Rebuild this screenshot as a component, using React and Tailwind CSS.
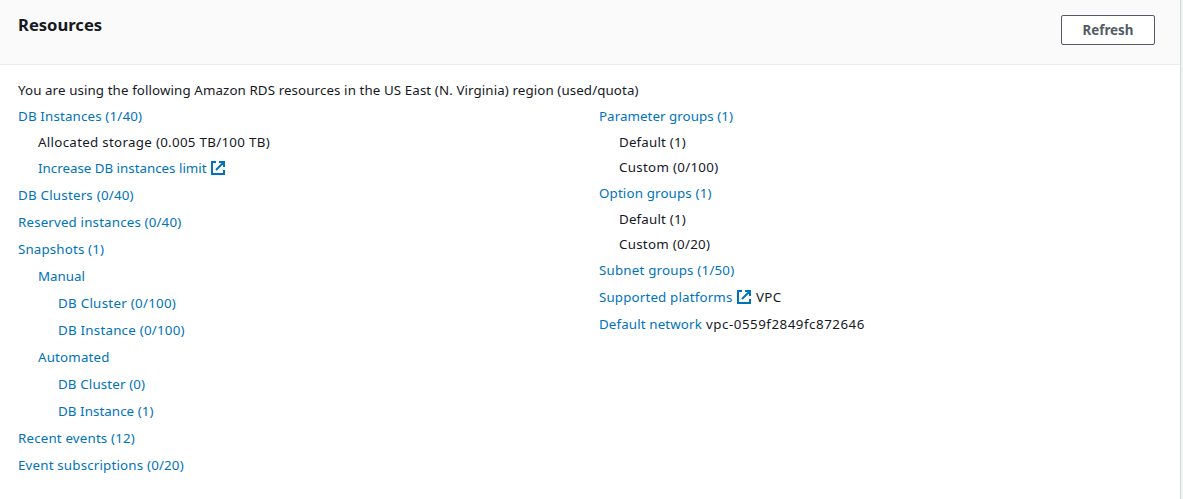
function External({ className }) {
  return (
    <svg className={`h-[14px] w-[14px] shrink-0 text-[#0073bb] ${className}`} viewBox="0 0 14 14" fill="none" stroke="currentColor" strokeWidth="2">
      <path d="M5 1H1v12h12V9M8 1h5v5M13 1L5 9" />
    </svg>
  );
}

function Row({ className, children }) {
  return <div className={`flex items-center whitespace-nowrap ${className}`}>{children}</div>;
}

function Link({ className = '', children }) {
  return <a className={`text-[#0073bb] ${className}`}>{children}</a>;
}

export default function App() {
  return (
    <div className="flex h-[499px] w-[1183px] overflow-hidden bg-[#f2f3f3] text-[13.33px] text-[#16191f] font-['Noto_Sans',sans-serif]">
      <section className="flex w-[1181px] flex-col border-r border-[#d5dbdb] bg-white">
        <header className="flex h-[65px] items-start justify-between border-b border-[#eaeded] bg-[#fafafa] pl-[18px] pr-[25px]">
          <h2 className="mt-[13px] text-[16.6px] font-bold leading-6">Resources</h2>
          <button className="mt-[15px] h-[30px] w-[94px] rounded-[2px] border border-[#545b64] bg-white pt-[2px] text-[13.33px] font-bold text-[#545b64]">Refresh</button>
        </header>
        <p className="mt-[12px] h-[27px] whitespace-nowrap pl-[18px] leading-[26px] tracking-[0.1px]">
          You are using the following Amazon RDS resources in the US East (N. Virginia) region (used/quota)
        </p>
        <div className="grid grid-cols-[581px_1fr] items-start pl-[18px]">
          <div>
            <Row className="h-[26px]"><Link className="tracking-[0.16px]">DB Instances (1/40)</Link></Row>
            <Row className="h-[26px] pl-5 tracking-[0.3px]">Allocated storage (0.005 TB/100 TB)</Row>
            <Row className="h-[26px] pl-5"><Link>Increase DB instances limit</Link><External className="mb-[2px] ml-1" /></Row>
            <Row className="h-[27px]"><Link className="tracking-[0.22px]">DB Clusters (0/40)</Link></Row>
            <Row className="h-[27px]"><Link className="tracking-[0.16px]">Reserved instances (0/40)</Link></Row>
            <Row className="h-[27px]"><Link className="tracking-[0.15px]">Snapshots (1)</Link></Row>
            <Row className="h-[27px] pl-5"><Link>Manual</Link></Row>
            <Row className="h-[27px] pl-10"><Link className="tracking-[0.28px]">DB Cluster (0/100)</Link></Row>
            <Row className="h-[27px] pl-10"><Link className="tracking-[0.23px]">DB Instance (0/100)</Link></Row>
            <Row className="h-[27px] pl-5"><Link className="tracking-[0.17px]">Automated</Link></Row>
            <Row className="h-[27px] pl-10"><Link className="tracking-[0.14px]">DB Cluster (0)</Link></Row>
            <Row className="h-[27px] pl-10"><Link className="tracking-[0.07px]">DB Instance (1)</Link></Row>
            <Row className="h-[27px]"><Link className="tracking-[0.17px]">Recent events (12)</Link></Row>
            <Row className="h-[27px]"><Link className="tracking-[0.18px]">Event subscriptions (0/20)</Link></Row>
          </div>
          <div>
            <Row className="h-[26px]"><Link className="tracking-[0.05px]">Parameter groups (1)</Link></Row>
            <Row className="h-[26px] pl-5 tracking-[0.18px]">Default (1)</Row>
            <Row className="mb-[2px] h-[23px] pl-5 tracking-[0.3px]">Custom (0/100)</Row>
            <Row className="h-[26px]"><Link className="tracking-[0.15px]">Option groups (1)</Link></Row>
            <Row className="h-[26px] pl-5 tracking-[0.18px]">Default (1)</Row>
            <Row className="mb-px h-[23px] pl-5 tracking-[0.27px]">Custom (0/20)</Row>
            <Row className="h-[27px]"><Link className="tracking-[0.2px]">Subnet groups (1/50)</Link></Row>
            <Row className="h-[27px]">
              <Link className="w-[138px] tracking-[0.16px]">Supported platforms</Link>
              <External className="mb-px mr-[5px]" />
              <span className="tracking-[0.3px]">VPC</span>
            </Row>
            <Row className="h-[27px]">
              <Link className="w-[107px] tracking-[0.13px]">Default network</Link>
              <span className="tracking-[0.52px]">vpc-0559f2849fc872646</span>
            </Row>
          </div>
        </div>
      </section>
    </div>
  );
}
